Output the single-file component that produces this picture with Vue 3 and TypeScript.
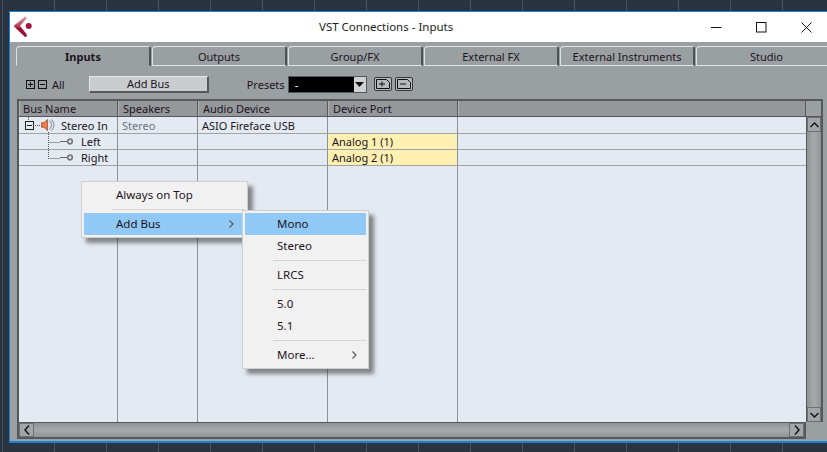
<script setup lang="ts">
const tabs = ['Inputs', 'Outputs', 'Group/FX', 'External FX', 'External Instruments', 'Studio']
const headers = ['Bus Name', 'Speakers', 'Audio Device', 'Device Port', '']
const rows = [
  { name: 'Stereo In', cls: 'bus', speakers: 'Stereo', device: 'ASIO Fireface USB', port: '' },
  { name: 'Left', cls: 'chan', speakers: '', device: '', port: 'Analog 1 (1)' },
  { name: 'Right', cls: 'chan', speakers: '', device: '', port: 'Analog 2 (1)' },
]
</script>

<template>
  <div class="desk">
    <div class="window">
      <header class="titlebar">
        <svg class="logo" width="20" height="26" viewBox="0 0 20 26">
          <defs>
            <linearGradient id="cb" x1="0" y1="0" x2="0" y2="1">
              <stop offset="0" stop-color="#e3a5b2" />
              <stop offset="0.45" stop-color="#b8405d" />
              <stop offset="0.6" stop-color="#9c1133" />
              <stop offset="1" stop-color="#9c1133" />
            </linearGradient>
          </defs>
          <path d="M0.500 12L12 2.500Q14 2.500 13.500 4.500L7 12L13.500 20Q14.500 23.500 12 23Z" fill="url(#cb)" />
          <circle cx="15.700" cy="12" r="3" fill="#a5173a" />
        </svg>
        <span class="title">VST Connections - Inputs</span>
        <div class="controls">
          <svg class="ctl" width="11" height="11" viewBox="0 0 11 11"><path d="M0 5.500H10.500" stroke="#111" fill="none" /></svg>
          <svg class="ctl" width="11" height="11" viewBox="0 0 11 11"><rect x="0.500" y="0.500" width="9.500" height="9.500" stroke="#111" fill="none" /></svg>
          <svg class="ctl" width="11" height="11" viewBox="0 0 11 11"><path d="M0.500 0.500L10.500 10.500M10.500 0.500L0.500 10.500" stroke="#111" fill="none" /></svg>
        </div>
      </header>

      <div class="body">
        <nav class="tabs">
          <div v-for="(t, i) in tabs" :key="t" class="tab" :class="{ active: i === 0 }">{{ t }}</div>
        </nav>

        <div class="toolbar">
          <span class="sq">
            <svg width="9" height="9" viewBox="0 0 9 9"><rect x="0.500" y="0.500" width="8" height="8" fill="none" stroke="#111" /><path d="M2 4.500H7M4.500 2V7" stroke="#111" /></svg>
            <svg width="9" height="9" viewBox="0 0 9 9"><rect x="0.500" y="0.500" width="8" height="8" fill="none" stroke="#111" /><path d="M2 4.500H7" stroke="#111" /></svg>
          </span>
          <span class="all">All</span>
          <button class="addbus">Add Bus</button>
          <span class="presets">Presets</span>
          <div class="combo">
            <span class="val">-</span>
            <span class="drop"><svg width="9" height="5" viewBox="0 0 9 5"><path d="M0 0H9L4.500 5Z" fill="#111" /></svg></span>
          </div>
          <button class="pbtn">
            <svg width="14" height="10" viewBox="0 0 14 10"><path d="M0.500 0.500H10.500L13.500 3.500V9.500H0.500Z M3 5H9M6 2.500V7.500" fill="none" stroke="#111" /></svg>
          </button>
          <button class="pbtn second">
            <svg width="14" height="10" viewBox="0 0 14 10"><path d="M0.500 0.500H10.500L13.500 3.500V9.500H0.500Z M3 5H9" fill="none" stroke="#111" /></svg>
          </button>
        </div>

        <div class="panel">
          <div class="list">
            <div class="head">
              <div v-for="(h, i) in headers" :key="i" class="hcell">{{ h }}</div>
              <div class="hcorner"></div>
            </div>
            <div class="main">
              <div class="rows">
                <div v-for="r in rows" :key="r.name" class="row">
                  <div class="cell" :class="r.cls">
                    <template v-if="r.cls === 'bus'">
                      <svg class="fold" width="9" height="9" viewBox="0 0 9 9"><rect x="0.500" y="0.500" width="8" height="8" fill="#e4eaf2" stroke="#222" /><path d="M2 4.500H7" stroke="#222" /></svg>
                      <svg class="spk" width="15" height="12" viewBox="0 0 16 13">
                        <path d="M9 2Q14 6.500 9 11M11 0.500Q17 6.500 11 12.500" fill="none" stroke="#9aa0a5" stroke-width="1.300" />
                        <path d="M0.500 4H3L7 0.500V12.500L3 9H0.500Z" fill="#ef7a4a" stroke="#8a3a1c" stroke-width="0.700" />
                      </svg>
                    </template>
                    <svg v-else class="pin" width="13" height="7" viewBox="0 0 13 7"><path d="M0 3.500H7" stroke="#666" /><circle cx="10" cy="3.500" r="2.300" fill="#e4eaf2" stroke="#777" stroke-width="1.700" /></svg>
                    {{ r.name }}
                  </div>
                  <div class="cell muted">{{ r.speakers }}</div>
                  <div class="cell">{{ r.device }}</div>
                  <div class="cell" :class="{ port: r.port }">{{ r.port }}</div>
                  <div class="cell last"></div>
                </div>
                <div class="row filler">
                  <div class="cell"></div><div class="cell"></div><div class="cell"></div><div class="cell"></div><div class="cell last"></div>
                </div>
              </div>
              <svg class="tree" width="70" height="48" viewBox="0 0 70 48">
                <path d="M9.500 0V4M14 8.500H22M29.500 15V41.500M29.500 25.500H41M29.500 41.500H41" stroke="#555" stroke-dasharray="1 1" fill="none" />
              </svg>
              <aside class="vscroll">
                <span class="arrow"><svg width="9" height="6" viewBox="0 0 9 6"><path d="M0.500 5L4.500 1L8.500 5" fill="none" stroke="#111" stroke-width="1.400" /></svg></span>
                <span class="arrow"><svg width="9" height="6" viewBox="0 0 9 6"><path d="M0.500 1L4.500 5L8.500 1" fill="none" stroke="#111" stroke-width="1.400" /></svg></span>
              </aside>
            </div>
            <div class="footer">
              <div class="hscroll">
                <span class="arrow h"><svg width="6" height="10" viewBox="0 0 6 10"><path d="M5 0.500L1 5L5 9.500" fill="none" stroke="#111" stroke-width="1.400" /></svg></span>
                <span class="arrow h"><svg width="6" height="10" viewBox="0 0 6 10"><path d="M1 0.500L5 5L1 9.500" fill="none" stroke="#111" stroke-width="1.400" /></svg></span>
              </div>
            </div>
          </div>

          <div class="menu first">
            <div class="mi">Always on Top</div>
            <div class="sep"></div>
            <div class="mi on">Add Bus
              <svg class="chev" width="5" height="8" viewBox="0 0 5 8"><path d="M0.500 0.500L4 4L0.500 7.500" fill="none" stroke="#555" stroke-width="1.100" /></svg>
            </div>
          </div>
          <div class="menu sub">
            <div class="mi on">Mono</div>
            <div class="mi">Stereo</div>
            <div class="sep"></div>
            <div class="mi">LRCS</div>
            <div class="sep"></div>
            <div class="mi">5.0</div>
            <div class="mi">5.1</div>
            <div class="sep"></div>
            <div class="mi">More...
              <svg class="chev" width="5" height="8" viewBox="0 0 5 8"><path d="M0.500 0.500L4 4L0.500 7.500" fill="none" stroke="#555" stroke-width="1.100" /></svg>
            </div>
          </div>
        </div>
      </div>
    </div>
  </div>
</template>

<style>
html, body { margin: 0; background: #2a3440; }
</style>

<style scoped>
.desk {
  width: 827px;
  height: 452px;
  box-sizing: border-box;
  padding: 11px 0 9px 9px;
  overflow: hidden;
  font: 11px/16px "Noto Sans", sans-serif;
  color: #1c1420;
  background-color: #2a3440;
  background-image: linear-gradient(90deg, #475361 1px, transparent 1px);
  background-size: 52px 100%;
  background-position: 2px 0;
}
.window {
  width: 822px;
  height: 432px;
  box-sizing: border-box;
  border: solid #1583dc;
  border-width: 1px 0 2px 1px;
  background: #9a9fa2;
  display: flex;
  flex-direction: column;
}
.titlebar {
  height: 30px;
  flex: none;
  background: #fff;
  display: flex;
  align-items: center;
  font-size: 11.500px;
}
.logo { margin-left: 3px; flex: none; }
.title { margin-left: 286px; white-space: nowrap; color: #222; }
.controls { margin-left: auto; display: flex; gap: 34px; padding-right: 19px; }
.ctl { display: block; flex: none; }
.body { flex: 1; display: flex; flex-direction: column; padding: 4px 0 0 6px; min-height: 0; }
.tabs { display: flex; height: 20px; flex: none; }
.tab {
  width: 135px;
  flex: none;
  box-sizing: border-box;
  margin-right: 1px;
  text-align: center;
  line-height: 19px;
  border-top: 1px solid #dfe2e3;
  border-left: 1px solid #dfe2e3;
  border-right: 2px solid #4d5154;
  border-bottom: 1px solid #dfe2e3;
  border-top-left-radius: 4px;
  border-top-right-radius: 3px;
}
.tab.active { font-weight: 700; border-bottom-color: #9a9fa2; }
.tab:last-child { border-right: 0; width: 140px; }
.toolbar {
  height: 33px;
  flex: none;
  box-sizing: border-box;
  display: flex;
  align-items: center;
  padding: 4px 0 0 10px;
}
.sq { display: flex; gap: 3px; }
.sq svg { display: block; }
.all { margin-left: 5px; }
.addbus {
  margin-left: 24px;
  width: 120px;
  height: 17px;
  padding: 0;
  font: inherit;
  line-height: 14px;
  color: inherit;
  background: #c9cdcf;
  border: solid;
  border-width: 1px 2px 2px 1px;
  border-color: #e4e6e7 #55595c #55595c #e4e6e7;
}
.presets { margin-left: 38px; }
.combo {
  margin-left: 3px;
  width: 79px;
  height: 17px;
  box-sizing: border-box;
  background: #000;
  color: #fff;
  border: 1px solid #55595c;
  display: flex;
  align-items: center;
  justify-content: space-between;
  line-height: 14px;
}
.val { padding-left: 6px; }
.drop { width: 12px; height: 15px; background: #cfd2d4; display: flex; align-items: center; justify-content: center; }
.pbtn {
  margin: -2px 0 0 7px;
  width: 18px;
  height: 14px;
  padding: 0;
  background: #b5b9bb;
  border: 1px solid #35383a;
  border-radius: 2px;
  display: flex;
  align-items: center;
  justify-content: center;
}
.pbtn.second { margin-left: 3px; }
.panel { position: relative; flex: 1; min-height: 0; margin-left: 1px; }
.list { height: 340px; width: 806px; display: flex; flex-direction: column; }
.head {
  display: flex;
  height: 18px;
  flex: none;
  box-sizing: border-box;
  border: solid #55595c;
  border-width: 2px 2px 1px 2px;
  background: #94989b;
  line-height: 15px;
}
.hcell {
  box-sizing: border-box;
  padding-left: 4px;
  border-right: 1px solid #55595c;
  border-left: 1px solid #b0b4b6;
  white-space: nowrap;
}
.hcell:nth-child(1) { width: 99px; padding-left: 3px; }
.hcell:nth-child(2) { width: 80px; }
.hcell:nth-child(3) { width: 130px; }
.hcell:nth-child(4) { width: 130px; }
.hcell:nth-child(5) { width: 348px; }
.hcorner { flex: 1; background: #9a9fa2; }
.main { flex: 1; display: flex; min-height: 0; position: relative; border-left: 2px solid #55595c; }
.rows { flex: 1; display: flex; flex-direction: column; background: #e4eaf2; }
.row { display: flex; height: 16px; flex: none; }
.row .cell { border-bottom: 1px solid #a0a4a6; }
.row:first-child { height: 17px; }
.cell {
  box-sizing: border-box;
  border-right: 1px solid #8d9194;
  height: 100%;
  white-space: nowrap;
  line-height: 15px;
  padding-left: 4px;
  display: flex;
  align-items: center;
}
.cell:nth-child(1) { width: 99px; padding: 0; }
.cell:nth-child(2) { width: 80px; }
.cell:nth-child(3) { width: 130px; }
.cell:nth-child(4) { width: 130px; }
.cell.last { width: 348px; border-right: 0; }
.muted { color: #6f7478; }
.port { background: #fff0b2; }
.fold { margin-left: 6px; flex: none; }
.spk { margin: 0 5px 0 7px; flex: none; }
.pin { margin: 0 8px 0 41px; flex: none; }
.filler { flex: 1; }
.filler .cell { border-bottom: 0; }
.tree { position: absolute; left: 0; top: 0; pointer-events: none; }
.vscroll {
  width: 17px;
  flex: none;
  box-sizing: border-box;
  border-left: 1px solid #55595c;
  border-right: 2px solid #55595c;
  background: linear-gradient(90deg, #8f9396, #a6aaac 50%, #8f9396);
  display: flex;
  flex-direction: column;
  justify-content: space-between;
}
.arrow {
  display: flex;
  align-items: center;
  justify-content: center;
  height: 15px;
  background: #a2a6a9;
  border: 1px solid #6c7073;
  box-sizing: border-box;
  flex: none;
}
.footer { height: 17px; flex: none; padding-right: 17px; }
.hscroll {
  height: 17px;
  box-sizing: border-box;
  border: solid #55595c;
  border-width: 1px 2px 2px 2px;
  background: linear-gradient(180deg, #8f9396, #a6aaac 50%, #8f9396);
  display: flex;
  justify-content: space-between;
}
.arrow.h { width: 15px; height: 14px; }
.menu {
  position: absolute;
  box-sizing: border-box;
  background: #f1f1f1;
  border: 1px solid #cfcfcf;
  padding: 2px;
  box-shadow: 5px 5px 4px rgba(50, 50, 50, 0.55);
  font-size: 11.500px;
}
.menu.first { left: 64px; top: 82px; width: 167px; height: 57px; }
.menu.sub { left: 225px; top: 111px; width: 127px; height: 159px; }
.mi {
  height: 22px;
  line-height: 22px;
  padding: 0 9px 0 32px;
  display: flex;
  align-items: center;
  justify-content: space-between;
  color: #1c1420;
}
.first .mi { padding-right: 11px; }
.mi.on { background: #90c8f6; }
.sep { height: 1px; background: #d4d4d4; margin: 3px 0 3px 28px; }
.chev { display: block; flex: none; }
</style>
